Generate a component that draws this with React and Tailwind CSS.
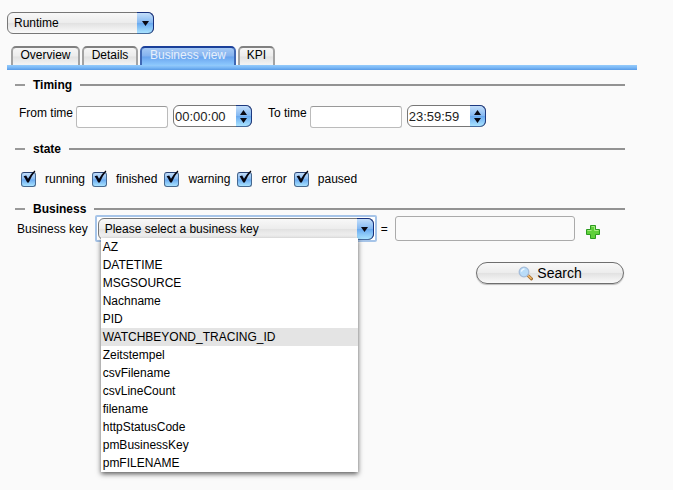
import React from "react";

const businessKeys = [
  "AZ",
  "DATETIME",
  "MSGSOURCE",
  "Nachname",
  "PID",
  "WATCHBEYOND_TRACING_ID",
  "Zeitstempel",
  "csvFilename",
  "csvLineCount",
  "filename",
  "httpStatusCode",
  "pmBusinessKey",
  "pmFILENAME",
];

const states = ["running", "finished", "warning", "error", "paused"];

const grey =
  "bg-[linear-gradient(#f8f8f8,#ececec_50%,#e2e2e2_52%,#fafafa)]";
const blue =
  "bg-[linear-gradient(#c3defa,#85b9f2_48%,#6aaaf0_52%,#a9e3ff)]";

function Picker({ label, value, className, menu }) {
  return (
    <div className={`relative h-[22px] ${className}`}>
      <select
        aria-label={label}
        defaultValue={value}
        className={`h-full w-full appearance-none rounded-md border border-[#777] pl-1.5 pr-6 text-xs leading-4 text-black outline-none ${grey}`}
      >
        <option>{value}</option>
      </select>
      <span
        className={`pointer-events-none absolute inset-y-0 right-0 flex w-[17px] items-center justify-center rounded-r-md border-y border-r border-[#17307c] border-b-[#466a9c] ${blue}`}
      >
        <svg width="7" height="5" viewBox="0 0 7 5">
          <path d="M0 0h7L3.5 5z" fill="#0a0a14" />
        </svg>
      </span>
      {menu}
    </div>
  );
}

function Tab({ children, active, className }) {
  return (
    <button
      type="button"
      role="tab"
      aria-selected={!!active}
      className={`flex h-[19px] items-start justify-center rounded-t-[5px] border-2 border-b-0 text-xs leading-[14px] ${className} ${
        active
          ? "border-[#1a3f99] border-x-[#3f68b4] bg-[linear-gradient(#a5c9f5,#83b2ef_48%,#68a3ee_52%,#8cc8fd)] text-[#e6f0fc]"
          : "border-[#808080] border-x-[#a3a3a3] bg-[linear-gradient(#f6f6f6,#ececec_48%,#e2e2e2_52%,#f4f4f4)] text-black"
      }`}
    >
      {children}
    </button>
  );
}

function Legend({ children, className }) {
  return (
    <h2
      className={`ml-2 mr-3 flex h-3 items-center text-xs font-bold leading-3 ${className}`}
    >
      <span className="mr-2 h-[2px] w-[10px] bg-[#999]" />
      {children}
      <span className="ml-2 h-[2px] flex-1 bg-[#929292]" />
    </h2>
  );
}

function TimeField({ label, id, time, className = "" }) {
  return (
    <div className={`flex items-start ${className}`}>
      <label htmlFor={id} className="mr-[3px] text-xs leading-4">
        {label}
      </label>
      <input
        id={id}
        type="text"
        className="mt-px h-[22px] w-[92px] rounded-[3px] border border-[#bbb] border-t-[#999] bg-white px-1 text-xs outline-none"
      />
      <div className="relative ml-[5px] h-[22px] w-[79px]">
        <input
          type="text"
          aria-label={`${label} of day`}
          defaultValue={time}
          className="h-full w-full rounded-md border border-[#777] bg-white pl-px pr-4 text-[13px] leading-4 text-[#222] outline-none"
        />
        <button
          type="button"
          aria-label={`Adjust ${label}`}
          className={`absolute inset-y-0 right-0 flex w-4 items-center justify-center rounded-r-md border-y border-r border-[#1d397f] border-b-[#466a9c] ${blue}`}
        >
          <svg width="7" height="13" viewBox="0 0 7 13">
            <path d="M0 5L3.5 0 7 5zM0 8h7L3.5 13z" fill="#0a0a14" />
          </svg>
        </button>
      </div>
    </div>
  );
}

function Check({ name }) {
  return (
    <label className="flex h-[18px] items-center text-xs">
      <span className="relative mr-[9px] h-[15px] w-[15px]">
        <input
          type="checkbox"
          defaultChecked
          className={`block h-[15px] w-[15px] appearance-none rounded-[3px] border border-[#46688f] border-t-[#274173] ${blue}`}
        />
        <svg
          className="pointer-events-none absolute -top-[2px] left-0"
          width="16"
          height="16"
          viewBox="0 0 16 16"
        >
          <path
            d="M2.6 6.2L5.2 5.6 7 8.8Q9.6 3.6 13.6.4L14.4 1.2Q10.4 5.8 7.8 12.4L6.2 12.4Q4.6 9 2.6 6.2z"
            fill="#050510"
          />
        </svg>
      </span>
      {name}
    </label>
  );
}

export default function App() {
  return (
    <main className="min-h-screen bg-[#fafafa] pl-[7px] pr-9 pt-3 font-['Liberation_Sans',Arial,sans-serif] text-xs text-black">
      <Picker label="View" value="Runtime" className="w-[147px]" />

      <div
        role="tablist"
        className="mt-3 flex items-end gap-[2px] pl-1"
      >
        <Tab className="w-[69px]">Overview</Tab>
        <Tab className="w-14">Details</Tab>
        <Tab active className="w-24">
          Business view
        </Tab>
        <Tab className="w-[37px]">KPI</Tab>
      </div>
      <div className="h-[5px] bg-[linear-gradient(#96ccfb,#7ab8f6_50%,#5a9be6)]" />

      <Legend className="mt-[9px]">Timing</Legend>
      <div className="mt-[14px] flex h-[23px] pl-3">
        <TimeField id="from" label="From time" time="00:00:00" />
        <TimeField id="to" label="To time" time="23:59:59" className="ml-4" />
      </div>

      <Legend className="mt-[15px]">state</Legend>
      <div className="mt-[15px] flex gap-[7px] pl-[14px]">
        {states.map((name) => (
          <Check key={name} name={name} />
        ))}
      </div>

      <Legend className="mt-[15px]">Business</Legend>
      <div className="flex h-[27px] items-center pl-[10px]">
        <span className="mr-[7px] leading-4">Business key</span>
        <div className="h-[27px] w-[282px] rounded-[2px] border-2 border-[#a6c4e8] bg-white px-px pt-px">
          <Picker
            label="Business key"
            value="Please select a business key"
            className="w-full"
            menu={
              <ul
                role="listbox"
                aria-label="Business key"
                className="absolute left-[3px] top-5 z-10 w-[257px] bg-white shadow-[0_2px_5px_rgba(0,0,0,0.65)]"
              >
                {businessKeys.map((key) => (
                  <li
                    key={key}
                    role="option"
                    aria-selected={key === "WATCHBEYOND_TRACING_ID"}
                    className="h-[18px] px-[2px] leading-[18px] aria-selected:bg-[#e4e4e4]"
                  >
                    {key}
                  </li>
                ))}
              </ul>
            }
          />
        </div>
        <span className="mx-1">=</span>
        <input
          type="text"
          aria-label="Business value"
          className="ml-[3px] h-[25px] w-[180px] rounded-[3px] border border-[#aaa] bg-[#fafafa] px-1 outline-none"
        />
        <button type="button" aria-label="Add condition" className="ml-[11px] mt-[6px]">
          <svg width="14" height="14" viewBox="0 0 14 14">
            <path
              d="M4.5.5h5v4h4v5h-4v4h-5v-4h-4v-5h4z"
              fill="#5fd03a"
              stroke="#2c9a20"
            />
            <path d="M5.5 1.5h3v4h4M1.5 5.5h4" fill="none" stroke="#a5ec82" />
          </svg>
        </button>
      </div>

      <div className="mr-[13px] mt-5 flex justify-end">
        <button
          type="button"
          className={`flex h-[22px] w-[148px] items-center justify-center gap-1 rounded-full border border-[#6e6e6e] text-sm leading-4 shadow-[0_1px_1px_rgba(0,0,0,0.25)] ${grey}`}
        >
          <svg width="15" height="15" viewBox="0 0 15 15">
            <path d="M9.5 9l4 3.8" stroke="#a06c30" strokeWidth="3" strokeLinecap="round" />
            <path d="M9.5 9l3.6 3.4" stroke="#eeb565" strokeWidth="1.5" strokeLinecap="round" />
            <circle cx="6" cy="6" r="4.8" fill="#b9dcf8" stroke="#a5bdda" strokeWidth="1.3" />
            <path d="M3.4 5.6Q4 3.2 6.5 3" fill="none" stroke="#edf7ff" strokeWidth="1.3" />
          </svg>
          Search
        </button>
      </div>
    </main>
  );
}
